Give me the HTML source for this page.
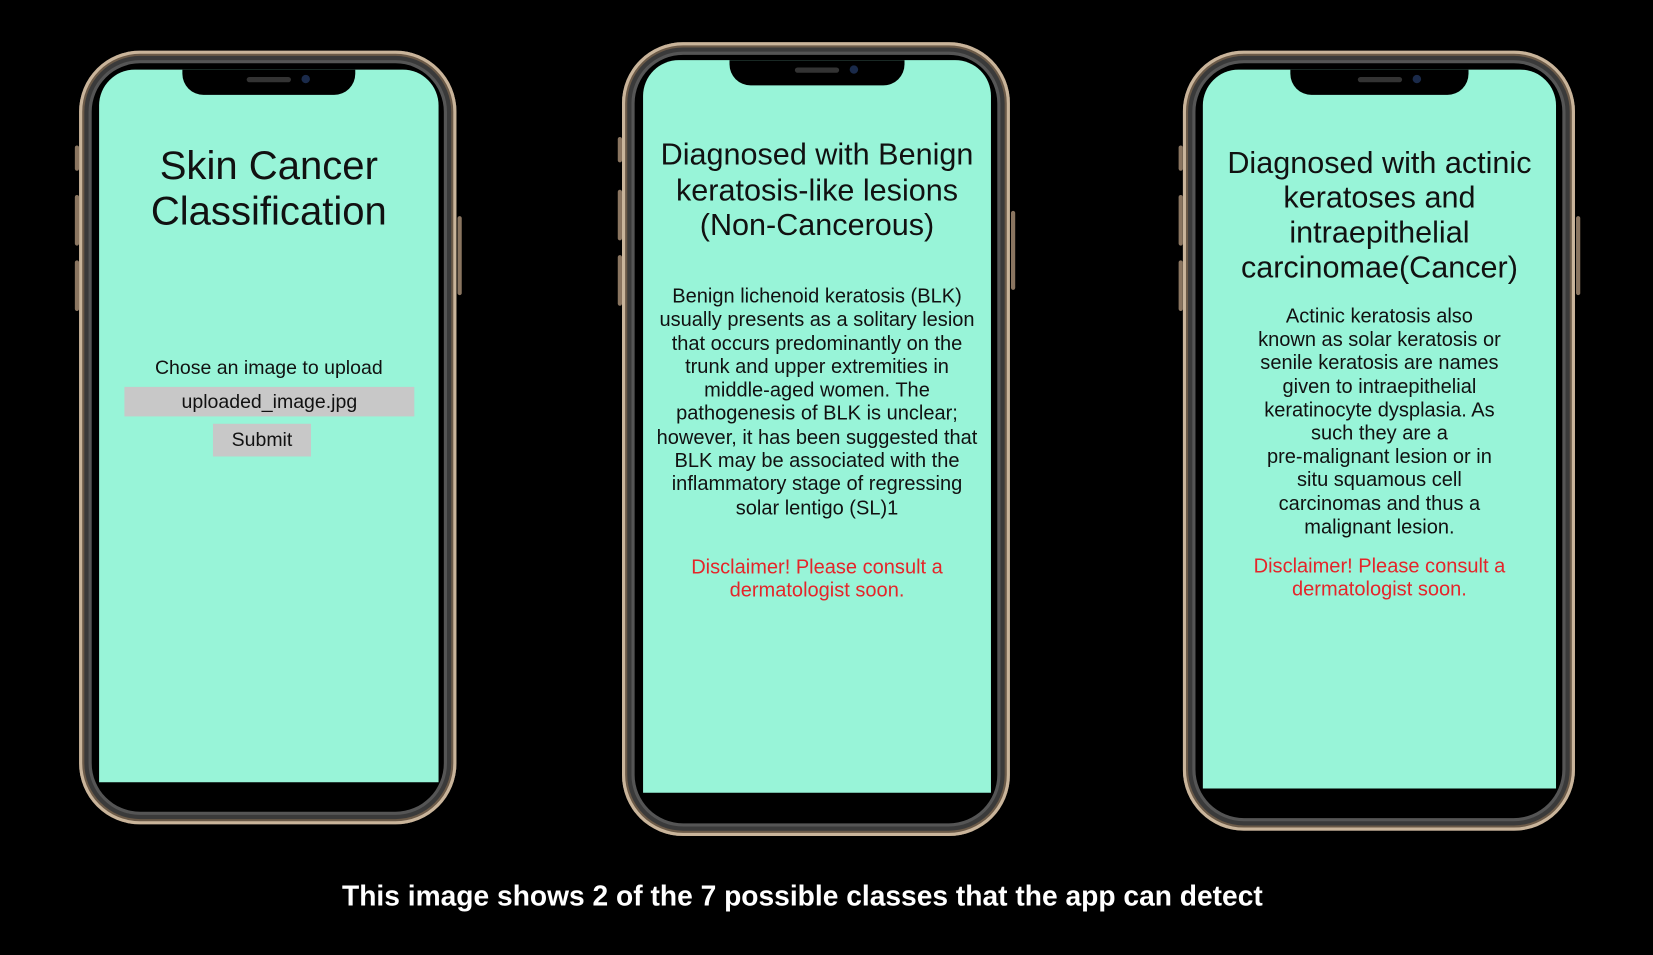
<!DOCTYPE html>
<html><head><meta charset="utf-8"><style>
html,body{margin:0;padding:0;background:#000;width:1653px;height:955px;overflow:hidden}
#w{position:absolute;left:0;top:0;width:1568px;height:906px;transform:scale(1.05421);transform-origin:0 0;font-family:"Liberation Sans",sans-serif}
.ph{position:absolute;border-radius:58px;background:#000;box-shadow:inset 0 0 0 3px #c9b49a,inset 0 0 0 5px #6b5a48,inset 0 0 0 9px #3a3a3a,inset 0 0 0 12px #555}
.sc{position:absolute;background:#98f4d8;border-radius:34px 34px 0 0;overflow:hidden}
.notch{position:absolute;top:0;height:24px;background:#000;border-radius:0 0 20px 20px}
.spk{position:absolute;top:7px;height:5px;border-radius:3px;background:#333}
.cam{position:absolute;top:5px;width:8px;height:8px;border-radius:50%;background:#1a2a4a}
.btn{position:absolute;width:4px;background:#8a7560;border-radius:2px}
.t{position:absolute;left:-10px;right:-10px;text-align:center;color:#111}
.red{color:#e5252a}
</style></head><body><div id="w">

<div class="ph" style="left:75px;top:48px;width:358px;height:734px"></div>
<div class="btn" style="left:71px;top:138px;height:24px"></div>
<div class="btn" style="left:71px;top:185px;height:48px"></div>
<div class="btn" style="left:71px;top:247px;height:48px"></div>
<div class="btn" style="left:434px;top:205px;height:75px"></div>
<div class="sc" style="left:94px;top:66px;width:322px;height:676px">
  <div class="notch" style="left:79px;width:164px"><div class="spk" style="left:61px;width:42px"></div><div class="cam" style="left:113px"></div></div>
  <div class="t" style="top:71px;font-size:38px;line-height:43px">Skin Cancer<br>Classification</div>
  <div class="t" style="top:272px;font-size:18.5px">Chose an image to upload</div>
  <div style="position:absolute;left:24px;top:301px;width:275px;height:28px;background:#c8c8c8;text-align:center;font-size:18.5px;line-height:28px;color:#111">uploaded_image.jpg</div>
  <div style="position:absolute;left:108px;top:336px;width:93px;height:31px;background:#c8c8c8;text-align:center;font-size:18.5px;line-height:30px;color:#111">Submit</div>
</div>

<div class="ph" style="left:590px;top:40px;width:368px;height:753px"></div>
<div class="btn" style="left:586px;top:130px;height:24px"></div>
<div class="btn" style="left:586px;top:180px;height:48px"></div>
<div class="btn" style="left:586px;top:242px;height:48px"></div>
<div class="btn" style="left:959px;top:200px;height:75px"></div>
<div class="sc" style="left:610px;top:57px;width:330px;height:695px">
  <div class="notch" style="left:82px;width:166px"><div class="spk" style="left:62px;width:42px"></div><div class="cam" style="left:114px"></div></div>
  <div class="t" style="top:74px;font-size:29px;line-height:33.5px">Diagnosed with Benign<br>keratosis-like lesions<br>(Non-Cancerous)</div>
  <div class="t" style="top:214px;font-size:19px;line-height:22.3px">Benign lichenoid keratosis (BLK)<br>usually presents as a solitary lesion<br>that occurs predominantly on the<br>trunk and upper extremities in<br>middle-aged women. The<br>pathogenesis of BLK is unclear;<br>however, it has been suggested that<br>BLK may be associated with the<br>inflammatory stage of regressing<br>solar lentigo (SL)1</div>
  <div class="t red" style="top:471px;font-size:19px;line-height:22.3px">Disclaimer! Please consult a<br>dermatologist soon.</div>
</div>

<div class="ph" style="left:1122px;top:48px;width:372px;height:740px"></div>
<div class="btn" style="left:1118px;top:138px;height:24px"></div>
<div class="btn" style="left:1118px;top:185px;height:48px"></div>
<div class="btn" style="left:1118px;top:247px;height:48px"></div>
<div class="btn" style="left:1495px;top:205px;height:75px"></div>
<div class="sc" style="left:1141px;top:66px;width:335px;height:682px">
  <div class="notch" style="left:83px;width:169px"><div class="spk" style="left:64px;width:42px"></div><div class="cam" style="left:116px"></div></div>
  <div class="t" style="top:73px;font-size:29px;line-height:33px">Diagnosed with actinic<br>keratoses and<br>intraepithelial<br>carcinomae(Cancer)</div>
  <div class="t" style="top:224px;font-size:19px;line-height:22.2px">Actinic keratosis also<br>known as solar keratosis or<br>senile keratosis are names<br>given to intraepithelial<br>keratinocyte dysplasia. As<br>such they are a<br>pre-malignant lesion or in<br>situ squamous cell<br>carcinomas and thus a<br>malignant lesion.</div>
  <div class="t red" style="top:461px;font-size:19px;line-height:22.3px">Disclaimer! Please consult a<br>dermatologist soon.</div>
</div>

<div style="position:absolute;left:225px;top:835px;width:1073px;text-align:center;color:#fff;font-weight:bold;font-size:27px;white-space:nowrap"><span style="display:inline-block;transform:scaleX(0.99)">This image shows 2 of the 7 possible classes that the app can detect</span></div>
</div></body></html>
